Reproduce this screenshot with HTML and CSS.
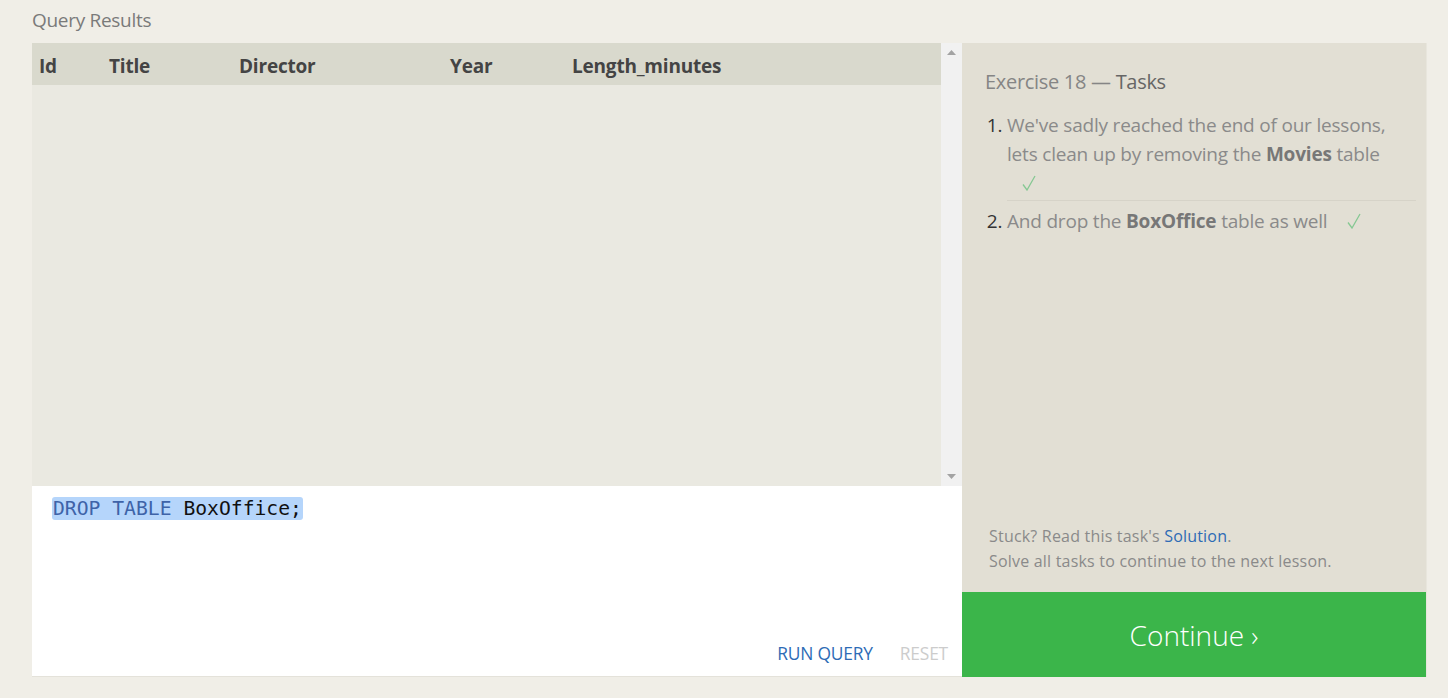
FILE: index.html
```html
<!DOCTYPE html>
<html>
<head>
<meta charset="utf-8">
<link rel="stylesheet" href="styles.css">
</head>
<body>
<div class="page">
  <div class="page-title">Query Results</div>
  <div class="workspace">
    <div class="left">
      <div class="results">
        <div class="table-wrap">
          <table class="grid">
            <thead>
              <tr>
                <th class="c1">Id</th>
                <th class="c2">Title</th>
                <th class="c3">Director</th>
                <th class="c4">Year</th>
                <th class="c5">Length_minutes</th>
              </tr>
            </thead>
          </table>
        </div>
        <div class="scrollbar">
          <svg class="arrow" width="9" height="5" viewBox="0 0 9 5"><polygon points="0,5 9,5 4.5,0" fill="#a3a3a3"/></svg>
          <svg class="arrow" width="9" height="5" viewBox="0 0 9 5"><polygon points="0,0 9,0 4.5,5" fill="#a3a3a3"/></svg>
        </div>
      </div>
      <div class="editor">
        <div class="code"><span class="sel"><span class="kw">DROP TABLE</span> BoxOffice;</span></div>
        <div class="actions">
          <span class="run">RUN QUERY</span>
          <span class="reset">RESET</span>
        </div>
      </div>
    </div>
    <div class="right">
      <div class="tasks">
        <h2 class="ex-title"><span class="ex-num">Exercise 18 —</span> <span class="ex-tasks">Tasks</span></h2>
        <ol class="task-list">
          <li class="task first">We've sadly reached the end of our lessons, lets clean up by removing the <b>Movies</b> table <span class="check"><svg width="14" height="16" viewBox="0 0 14 16"><path d="M1 9.5 L5 15 L13 1" fill="none" stroke="#86c893" stroke-width="1.3"/></svg></span></li>
          <li class="task">And drop the <b>BoxOffice</b> table as well <span class="check"><svg width="14" height="16" viewBox="0 0 14 16"><path d="M1 9.5 L5 15 L13 1" fill="none" stroke="#86c893" stroke-width="1.3"/></svg></span></li>
        </ol>
        <div class="spacer"></div>
        <div class="hint">
          <p>Stuck? Read this task's <a class="link">Solution</a>.</p>
          <p>Solve all tasks to continue to the next lesson.</p>
        </div>
      </div>
      <div class="continue">Continue ›</div>
    </div>
  </div>
</div>
</body>
</html>
```

FILE: styles.css
```css
html, body {
  margin: 0;
  padding: 0;
  background: #f0eee7;
}
body {
  font-family: "Open Sans", "Noto Sans", sans-serif;
  width: 1448px;
  height: 698px;
  overflow: hidden;
}
.page {
  padding: 0 21px 0 32px;
}
.page-title {
  height: 43px;
  line-height: 40px;
  font-size: 19px;
  color: #7a7a7a;
  letter-spacing: -0.3px;
}
.workspace {
  display: flex;
  height: 634px;
}
.left {
  width: 930px;
  display: flex;
  flex-direction: column;
}
.results {
  height: 443px;
  display: flex;
  background: #eae9e1;
}
.table-wrap {
  flex: 1;
}
.grid {
  border-collapse: collapse;
  width: 100%;
  table-layout: fixed;
}
.grid th {
  background: #d9d9cd;
  height: 42px;
  padding: 3px 0 0 7px;
  box-sizing: border-box;
  text-align: left;
  font-size: 19px;
  font-weight: 700;
  color: #444;
  letter-spacing: -0.2px;
}
.c1 { width: 70px; }
.c2 { width: 130px; }
.c3 { width: 211px; }
.c4 { width: 122px; }
.scrollbar {
  width: 21px;
  background: #f1f1f1;
  display: flex;
  flex-direction: column;
  justify-content: space-between;
  align-items: center;
  padding: 7px 0 7px;
  box-sizing: border-box;
}
.editor {
  flex: 1;
  background: #fff;
  display: flex;
  flex-direction: column;
  justify-content: space-between;
  border-bottom: 1px solid #e4e2da;
}
.code {
  padding: 12px 0 0 20px;
  font-family: "DejaVu Sans Mono", "Liberation Mono", monospace;
  font-size: 19.7px;
  line-height: 22px;
  color: #111;
}
.sel {
  background: #b5d5fb;
  border-radius: 3px;
  padding: 0 1px;
}
.kw {
  color: #3e63a8;
}
.actions {
  display: flex;
  justify-content: flex-end;
  gap: 27px;
  padding: 0 14px 11px 0;
  font-size: 17.4px;
  letter-spacing: -0.2px;
}
.run { color: #2d6bb5; }
.reset { color: #cccccc; }
.right {
  flex: 1;
  display: flex;
  flex-direction: column;
  background: #e2dfd4;
  border-right: 1px solid #e8e6dd;
}
.tasks {
  flex: 1;
  display: flex;
  flex-direction: column;
  padding: 25px 10px 18px 23px;
}
.ex-title {
  margin: 0;
  font-size: 20px;
  font-weight: 400;
  line-height: 28px;
  letter-spacing: -0.3px;
}
.ex-num { color: #858585; }
.ex-tasks { color: #666; }
.task-list {
  margin: 15px 0 0;
  padding: 0 0 0 22px;
  color: #333;
  font-size: 19px;
  line-height: 29px;
  letter-spacing: -0.2px;
}
.task {
  color: #8a8a8a;
  padding-left: 0;
}
.task::marker { color: #333; }
.task b { color: #777; }
.task.first {
  border-bottom: 1px solid #d6d3c8;
  padding-bottom: 2px;
  margin-bottom: 6px;
}
.check {
  display: inline-block;
  width: 28px;
  margin-left: 12px;
  line-height: 16px;
  vertical-align: -1px;
}
.check svg {
  display: block;
  margin-left: 3px;
}
.spacer { flex: 1; }
.hint {
  padding-left: 4px;
  font-size: 16px;
  line-height: 25px;
  color: #8a8a8a;
  letter-spacing: 0.2px;
}
.hint p { margin: 0; }
.link { color: #2d6bb5; }
.continue {
  height: 85px;
  background: #3bb54a;
  color: #fff;
  font-size: 28px;
  font-weight: 300;
  display: flex;
  align-items: center;
  justify-content: center;
}
```
